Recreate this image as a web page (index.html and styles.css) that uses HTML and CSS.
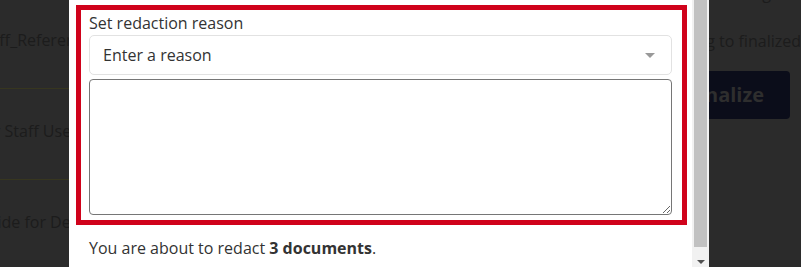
FILE: index.html
```html
<!DOCTYPE html>
<html lang="en">
<head>
  <meta charset="UTF-8">
  <meta name="viewport" content="width=device-width, initial-scale=1.0">
  <title>Redact documents</title>
  <link rel="stylesheet" href="styles.css">
</head>
<body>
  <div class="page">
    <div class="files">
      <div class="file-row">Staff_Reference_Manual.pdf</div>
      <div class="file-row">For Staff Use Only.docx</div>
      <div class="file-row">Guide for Department Heads.pdf</div>
    </div>
    <div class="side">
      <p class="side-title">Ready for processing</p>
      <p class="side-hint">Move 3 documents from processing to finalized</p>
      <button class="finalize">Finalize</button>
    </div>
  </div>

  <div class="modal">
    <div class="modal-body">
      <div class="reason-group">
        <label class="reason-label" for="reason">Set redaction reason</label>
        <div class="reason-select" id="reason">
          <span>Enter a reason</span>
          <span class="caret"></span>
        </div>
        <textarea class="reason-text"></textarea>
      </div>
      <p class="summary">You are about to redact <strong>3 documents</strong>.</p>
    </div>
    <div class="scrollbar">
      <div class="thumb"></div>
      <div class="scroll-down"><span class="arrow"></span></div>
    </div>
  </div>
</body>
</html>
```

FILE: styles.css
```css
body {
  margin: 0;
  font-family: 'Open Sans', 'Liberation Sans', sans-serif;
  font-size: 16px;
  line-height: 24px;
  background-color: #2b2b2b;
  overflow: hidden;
}
.page {
  display: flex;
  width: 801px;
  height: 267px;
}
.files {
  width: 380px;
  margin: -2px 0 0 -24px;
  flex-shrink: 0;
}
.file-row {
  height: 60px;
  padding-top: 30px;
  border-bottom: 1px solid #37361f;
  color: #1c1c1c;
  white-space: nowrap;
}
.side {
  flex: 1;
  display: flex;
  flex-direction: column;
  align-items: flex-end;
  min-width: 0;
}
.side p {
  margin: 0;
  white-space: nowrap;
  color: #1c1c1c;
}
.side-title {
  margin-top: -19px !important;
  padding-right: 30px;
}
.side-hint {
  margin-top: 24px !important;
}
.finalize {
  margin: 18px 11px 0 0;
  padding: 12px 26px;
  border: none;
  border-radius: 4px;
  background: #0b0d1a;
  color: #2e2e2e;
  font-family: inherit;
  font-size: 20px;
  line-height: 24px;
  font-weight: bold;
}

.modal {
  position: fixed;
  top: 0;
  left: 69px;
  width: 640px;
  height: 267px;
  display: flex;
  background: white;
}
.modal-body {
  flex: 1;
  overflow: hidden;
  padding: 5px 5px 0 7px;
  color: #333;
}
.reason-group {
  border: 5px solid #d0021b;
  padding: 1px 10px 5px 8px;
}
.reason-label {
  display: block;
}
.reason-select {
  display: flex;
  align-items: center;
  justify-content: space-between;
  box-sizing: border-box;
  height: 40px;
  padding: 0 16px 0 13px;
  border: 1px solid #e2e2e2;
  border-radius: 5px;
  color: #333;
}
.caret {
  width: 0;
  height: 0;
  border-left: 5px solid transparent;
  border-right: 5px solid transparent;
  border-top: 5px solid #999;
}
.reason-text {
  display: block;
  box-sizing: border-box;
  width: 100%;
  height: 136px;
  margin-top: 4px;
  border: 1px solid #767676;
  border-radius: 4px;
  font-family: inherit;
  font-size: 16px;
}
.summary {
  margin: 11px 0 0 13px;
}
.summary strong {
  font-weight: bold;
}
.scrollbar {
  width: 17px;
  display: flex;
  flex-direction: column;
  background: #f1f1f1;
}
.thumb {
  height: 247px;
  margin: 0 2px;
  background: #c1c1c1;
}
.scroll-down {
  flex: 1;
  display: flex;
  justify-content: center;
  align-items: flex-end;
  padding-bottom: 3px;
}
.arrow {
  width: 0;
  height: 0;
  border-left: 4px solid transparent;
  border-right: 4px solid transparent;
  border-top: 4px solid #505050;
}
```
